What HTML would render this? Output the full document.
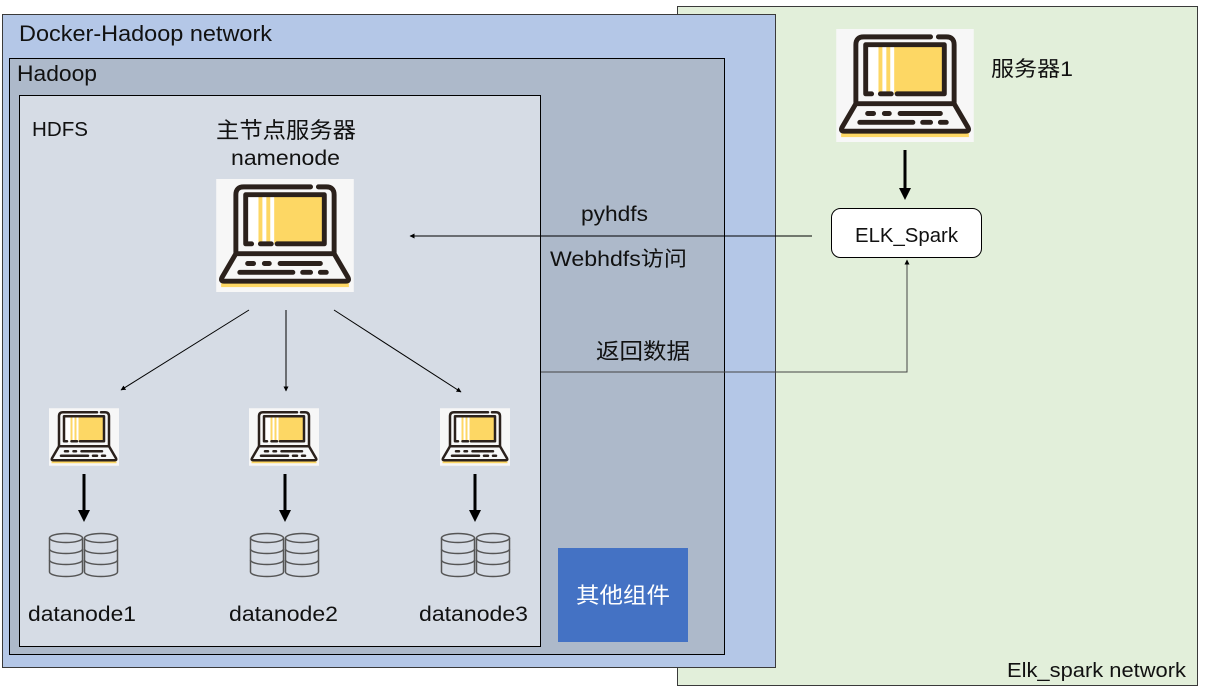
<!DOCTYPE html>
<html><head><meta charset="utf-8"><style>
body{margin:0;background:#fff;}
svg{display:block;font-family:"Liberation Sans","Noto Sans CJK SC",sans-serif;}
</style></head><body>
<svg width="1209" height="698" viewBox="0 0 1209 698" xmlns="http://www.w3.org/2000/svg">
<defs>
<symbol id="lap" viewBox="0 0 140 115">
<rect x="0" y="0" width="140" height="115" fill="#f7f7f7"/>
<rect x="32" y="16" width="78" height="50" fill="#fdd764"/>
<rect x="32" y="16" width="11" height="50" fill="#fff"/>
<rect x="47" y="16" width="4" height="50" fill="#fff"/>
<rect x="55" y="16" width="4" height="50" fill="#fff"/>
<rect x="5" y="106" width="130" height="4" fill="#fdd764"/>
<g fill="none" stroke="#2b211c" stroke-width="5" stroke-linecap="round" stroke-linejoin="round">
<path d="M96 8 H28 Q20 8 20 16 V76 M104 8 H112 Q120 8 120 16 V76"/>
<path d="M30 16 V66 H36 M45 66 H56 M62 66 H110 V16 H30"/>
<path d="M20 76 L6 100 Q4 104 8 104 H132 Q136 104 134 100 L120 76 Z"/>
<path d="M32 86 H38 M49 86 H54 M65 86 H106 M24 95 H78 M88 95 H96 M106 95 H112"/>
</g>
</symbol>
<symbol id="cyl" viewBox="0 0 36 46">
<g fill="none" stroke="#555" stroke-width="1.5">
<ellipse cx="18" cy="6" rx="16.5" ry="4.5"/>
<path d="M1.5 6 V40 A16.5 4.5 0 0 0 34.5 40 V6"/>
<path d="M1.5 17 A16.5 4.5 0 0 0 34.5 17 M1.5 28 A16.5 4.5 0 0 0 34.5 28"/>
</g>
</symbol>
<marker id="ab" viewBox="0 0 10 10" refX="9" refY="5" markerWidth="5" markerHeight="5" orient="auto"><path d="M0 0 L10 5 L0 10 Z" fill="#000"/></marker>
</defs>
<rect x="677.5" y="6.5" width="520" height="679" fill="#e2efda" stroke="#3a3a3a" stroke-width="1"/>
<rect x="2.5" y="14.5" width="773" height="653" fill="#b4c7e7" stroke="#3a3a3a" stroke-width="1"/>
<rect x="9.5" y="58.5" width="715" height="596" fill="#adb9ca" stroke="#000" stroke-width="1"/>
<rect x="19.5" y="95.5" width="521" height="551" fill="#d6dce5" stroke="#000" stroke-width="1"/>
<rect x="831.5" y="208.5" width="150" height="49" rx="9" fill="#fff" stroke="#000"/>
<g fill="#111">
<text x="19" y="41" font-size="22" textLength="253" lengthAdjust="spacingAndGlyphs">Docker-Hadoop network</text>
<text x="17" y="81" font-size="22" textLength="80" lengthAdjust="spacingAndGlyphs">Hadoop</text>
<text x="32" y="136" font-size="20" textLength="56" lengthAdjust="spacingAndGlyphs">HDFS</text>
<text x="216" y="138" font-size="22" textLength="140" lengthAdjust="spacingAndGlyphs">主节点服务器</text>
<text x="231" y="165" font-size="21" textLength="109" lengthAdjust="spacingAndGlyphs">namenode</text>
<text x="991" y="76" font-size="21" textLength="82" lengthAdjust="spacingAndGlyphs">服务器1</text>
<text x="28" y="621" font-size="21" textLength="108" lengthAdjust="spacingAndGlyphs">datanode1</text>
<text x="229" y="621" font-size="21" textLength="109" lengthAdjust="spacingAndGlyphs">datanode2</text>
<text x="419" y="621" font-size="21" textLength="109" lengthAdjust="spacingAndGlyphs">datanode3</text>
<text x="855" y="242" font-size="20" textLength="103" lengthAdjust="spacingAndGlyphs">ELK_Spark</text>
<text x="581" y="221" font-size="21" textLength="67" lengthAdjust="spacingAndGlyphs">pyhdfs</text>
<text x="550" y="266" font-size="21" textLength="137" lengthAdjust="spacingAndGlyphs">Webhdfs访问</text>
<text x="596" y="359" font-size="22" textLength="94" lengthAdjust="spacingAndGlyphs">返回数据</text>
<text x="1007" y="677" font-size="20" textLength="179" lengthAdjust="spacingAndGlyphs">Elk_spark network</text>
</g>
<use href="#lap" x="216" y="179" width="138" height="113"/>
<use href="#lap" x="836" y="29" width="138" height="113"/>
<use href="#lap" x="49" y="408" width="70" height="58"/>
<use href="#lap" x="249" y="408" width="70" height="58"/>
<use href="#lap" x="440" y="408" width="70" height="58"/>
<g stroke="#000" stroke-width="1">
<line x1="249" y1="310" x2="121" y2="390" marker-end="url(#ab)"/>
<line x1="286" y1="310" x2="286" y2="391" marker-end="url(#ab)"/>
<line x1="334" y1="310" x2="461" y2="392" marker-end="url(#ab)"/>
<line x1="812" y1="236" x2="410" y2="236" marker-end="url(#ab)"/>
<polyline points="541,372 907,372 907,260" fill="none" stroke="#444" marker-end="url(#ab)"/>
</g>
<g stroke="#000" stroke-width="3">
<line x1="905" y1="150" x2="905" y2="190"/>
<line x1="84" y1="474" x2="84" y2="512"/>
<line x1="285" y1="474" x2="285" y2="512"/>
<line x1="475" y1="474" x2="475" y2="512"/>
</g>
<g fill="#000">
<path d="M899 188 L911 188 L905 200 Z"/>
<path d="M78 510 L90 510 L84 522 Z"/>
<path d="M279 510 L291 510 L285 522 Z"/>
<path d="M469 510 L481 510 L475 522 Z"/>
</g>
<use href="#cyl" x="48" y="532" width="36" height="46"/>
<use href="#cyl" x="83" y="532" width="36" height="46"/>
<use href="#cyl" x="249" y="532" width="36" height="46"/>
<use href="#cyl" x="284" y="532" width="36" height="46"/>
<use href="#cyl" x="440" y="532" width="36" height="46"/>
<use href="#cyl" x="475" y="532" width="36" height="46"/>
<rect x="558" y="548" width="130" height="94" fill="#4472c4"/>
<text x="576" y="603" font-size="22" fill="#fff" textLength="94" lengthAdjust="spacingAndGlyphs">其他组件</text>
</svg>
</body></html>
